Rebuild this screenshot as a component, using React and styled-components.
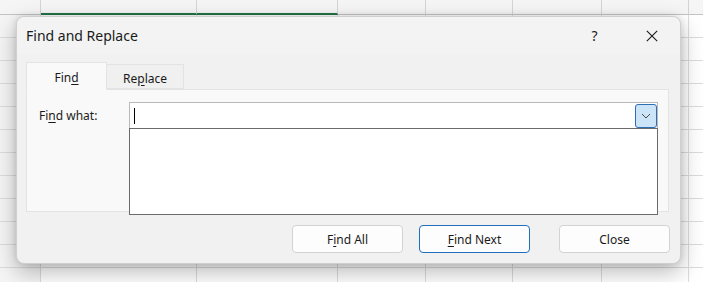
import styled, { createGlobalStyle } from "styled-components";

const GlobalStyle = createGlobalStyle`
  html, body {
    margin: 0;
    background: #ffffff;
  }
  body {
    font-family: "Noto Sans", "Liberation Sans", sans-serif;
    color: #1a1a1a;
  }
`;

const COLUMNS = [41, 156, 141, 88, 87, 89, 87, 40];
const ROW_COUNT = 12;

const App = () => {
  return (
    <>
      <GlobalStyle />
      <Sheet>
        <HeaderRow>
          {COLUMNS.map((w, i) => (
            <HeaderCell key={i} $width={w} $selected={i === 1 || i === 2} />
          ))}
        </HeaderRow>
        {Array.from({ length: ROW_COUNT }).map((_, r) => (
          <Row key={r}>
            {COLUMNS.map((w, i) => (
              <Cell key={i} $width={w} $rowHeader={i === 0} />
            ))}
          </Row>
        ))}

        <Dialog>
          <TitleBar>
            <Title>Find and Replace</Title>
            <TitleActions>
              <TitleButton>?</TitleButton>
              <TitleButton>
                <svg width="12" height="12" viewBox="0 0 12 12">
                  <path
                    d="M0.8 0.8 L11.2 11.2 M11.2 0.8 L0.8 11.2"
                    stroke="#1a1a1a"
                    strokeWidth="1.1"
                    fill="none"
                  />
                </svg>
              </TitleButton>
            </TitleActions>
          </TitleBar>

          <Body>
            <Tabs>
              <Tab $active>
                Fin<u>d</u>
              </Tab>
              <Tab>
                Re<u>p</u>lace
              </Tab>
            </Tabs>
            <Panel>
              <Label>
                Fi<u>n</u>d what:
              </Label>
              <Field>
                <ComboBox>
                  <Caret />
                  <DropButton>
                    <svg width="10" height="6" viewBox="0 0 10 6">
                      <path
                        d="M1 1 L5 5 L9 1"
                        stroke="#4a4a4a"
                        strokeWidth="1"
                        fill="none"
                      />
                    </svg>
                  </DropButton>
                </ComboBox>
                <ListBox />
              </Field>
            </Panel>

            <ButtonRow>
              <Button>
                F<u>i</u>nd All
              </Button>
              <Button $primary>
                <u>F</u>ind Next
              </Button>
              <Button $wide>Close</Button>
            </ButtonRow>
          </Body>
        </Dialog>
      </Sheet>
    </>
  );
};

export default App;

const Sheet = styled.div`
  position: relative;
  width: 703px;
  height: 282px;
  overflow: hidden;
  background: #ffffff;
`;

const HeaderRow = styled.div`
  display: flex;
  height: 15px;
  background: #f5f5f5;
`;

const HeaderCell = styled.div`
  flex: 0 0 ${({ $width }) => $width}px;
  box-sizing: border-box;
  border-right: 1px solid #d4d4d4;
  border-bottom: ${({ $selected }) =>
    $selected ? "2px solid #217346" : "1px solid #c4c4c4"};
`;

const Row = styled.div`
  display: flex;
  height: 23px;
`;

const Cell = styled.div`
  flex: 0 0 ${({ $width }) => $width}px;
  box-sizing: border-box;
  background: ${({ $rowHeader }) => ($rowHeader ? "#f5f5f5" : "#ffffff")};
  border-right: 1px solid #dcdcdc;
  border-bottom: 1px solid #dcdcdc;
`;

const Dialog = styled.div`
  position: absolute;
  left: 16px;
  top: 16px;
  width: 665px;
  height: 248px;
  box-sizing: border-box;
  background: #f1f1f1;
  border: 1px solid #cfcfcf;
  border-radius: 8px;
  box-shadow: 0 8px 22px rgba(0, 0, 0, 0.28), 0 0 6px rgba(0, 0, 0, 0.12);
  display: flex;
  flex-direction: column;
`;

const TitleBar = styled.div`
  display: flex;
  align-items: center;
  justify-content: space-between;
  height: 37px;
  padding-left: 9px;
  background: #f3f3f3;
  border-radius: 8px 8px 0 0;
`;

const Title = styled.div`
  font-size: 14px;
  color: #1a1a1a;
`;

const TitleActions = styled.div`
  display: flex;
  align-items: center;
  align-self: stretch;
`;

const TitleButton = styled.div`
  width: 57px;
  display: flex;
  align-items: center;
  justify-content: center;
  font-size: 14px;
  color: #1a1a1a;
`;

const Body = styled.div`
  flex: 1;
  display: flex;
  flex-direction: column;
  padding: 8px 11px 0 9px;
`;

const Tabs = styled.div`
  display: flex;
  align-items: flex-end;
  height: 27px;
`;

const Tab = styled.div`
  box-sizing: border-box;
  width: ${({ $active }) => ($active ? 81 : 77)}px;
  height: ${({ $active }) => ($active ? 28 : 25)}px;
  margin-bottom: ${({ $active }) => ($active ? -1 : 0)}px;
  padding-top: 3px;
  display: flex;
  align-items: center;
  justify-content: center;
  font-size: 12px;
  background: ${({ $active }) => ($active ? "#f9f9f9" : "#f0f0f0")};
  border: 1px solid #e3e3e3;
  border-bottom: ${({ $active }) =>
    $active ? "1px solid #f9f9f9" : "1px solid #e3e3e3"};
  border-left-width: ${({ $active }) => ($active ? 1 : 0)}px;
  position: relative;
  z-index: ${({ $active }) => ($active ? 1 : 0)};

  u {
    text-underline-offset: 2px;
  }
`;

const Panel = styled.div`
  box-sizing: border-box;
  height: 123px;
  display: flex;
  align-items: flex-start;
  padding: 12px 10px 0 12px;
  background: #f9f9f9;
  border: 1px solid #e3e3e3;
`;

const Label = styled.div`
  width: 90px;
  height: 26px;
  display: flex;
  align-items: center;
  font-size: 12px;

  u {
    text-underline-offset: 2px;
  }
`;

const Field = styled.div`
  flex: 1;
  display: flex;
  flex-direction: column;
`;

const ComboBox = styled.div`
  box-sizing: border-box;
  height: 26px;
  display: flex;
  align-items: center;
  justify-content: space-between;
  padding: 0 0 0 4px;
  background: #ffffff;
  border: 1px solid #b9b9b9;
  border-bottom: none;
`;

const Caret = styled.div`
  width: 1px;
  height: 16px;
  background: #000000;
`;

const DropButton = styled.div`
  box-sizing: border-box;
  width: 22px;
  height: 24px;
  display: flex;
  align-items: center;
  justify-content: center;
  background: #cce4f7;
  border: 1px solid #2e6fb4;
  border-radius: 3px;
  margin-top: 1px;
`;

const ListBox = styled.div`
  box-sizing: border-box;
  height: 87px;
  background: #ffffff;
  border: 1px solid #6b6b6b;
`;

const ButtonRow = styled.div`
  display: flex;
  justify-content: flex-end;
  align-items: center;
  padding-top: 13px;
  margin-right: -1px;
`;

const Button = styled.div`
  box-sizing: border-box;
  width: 111px;
  height: 28px;
  margin-left: ${({ $wide }) => ($wide ? 29 : 16)}px;
  display: flex;
  align-items: center;
  justify-content: center;
  font-size: 12px;
  background: #fdfdfd;
  border: 1px solid ${({ $primary }) => ($primary ? "#1f6fbf" : "#d3d3d3")};
  border-radius: 4px;

  u {
    text-underline-offset: 2px;
  }
`;
